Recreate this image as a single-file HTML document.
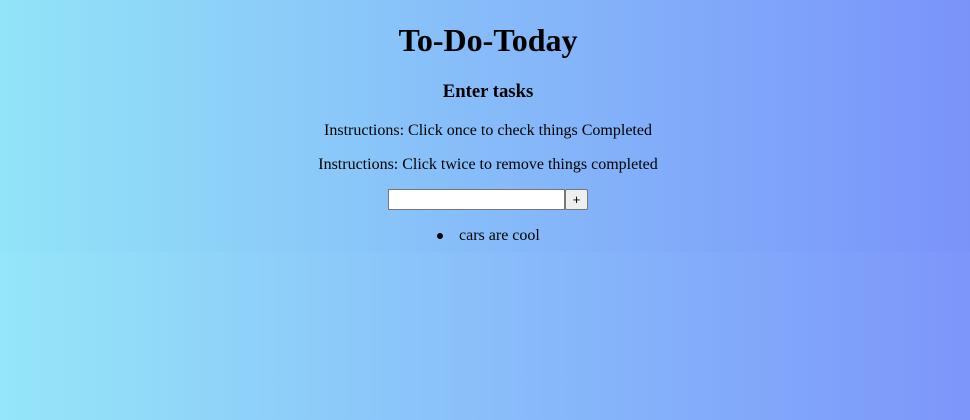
<!DOCTYPE html>
<html><head><style>
html,body{margin:0;padding:0;width:970px;height:420px;overflow:hidden;font-family:"Liberation Serif",serif;}
.bg2{position:absolute;left:0;top:0;width:970px;height:420px;background:linear-gradient(to right,#95e6f9,#7c96fa);}
.bg1{position:absolute;left:0;top:0;width:970px;height:252px;background:linear-gradient(to right,#92e4f8,#7a93fa);}
.c{position:absolute;left:3px;width:970px;text-align:center;color:#000;}
h1{margin:0;font-size:32px;}
h3{margin:0;font-size:18.7px;}
</style></head><body>
<div class="bg2"></div><div class="bg1"></div>
<div class="c" style="top:22px"><h1>To-Do-Today</h1></div>
<div class="c" style="top:81px"><h3>Enter tasks</h3></div>
<div class="c" style="top:122px;font-size:16px">Instructions: Click once to check things Completed</div>
<div class="c" style="top:156px;font-size:16px">Instructions: Click twice to remove things completed</div>
<div style="position:absolute;left:388px;top:189px;width:175px;height:19px;background:#fff;border:1px solid #767676;"></div>
<div style="position:absolute;left:565px;top:189px;width:21px;height:19px;background:#efefef;border:1px solid #767676;border-radius:2px;font-family:'Liberation Sans',sans-serif;font-size:13px;text-align:center;line-height:19px;">+</div>
<div style="position:absolute;left:437px;top:233px;width:6px;height:6px;border-radius:50%;background:#000;"></div>
<div style="position:absolute;left:459px;top:227px;font-size:16px;">cars are cool</div>
</body></html>
